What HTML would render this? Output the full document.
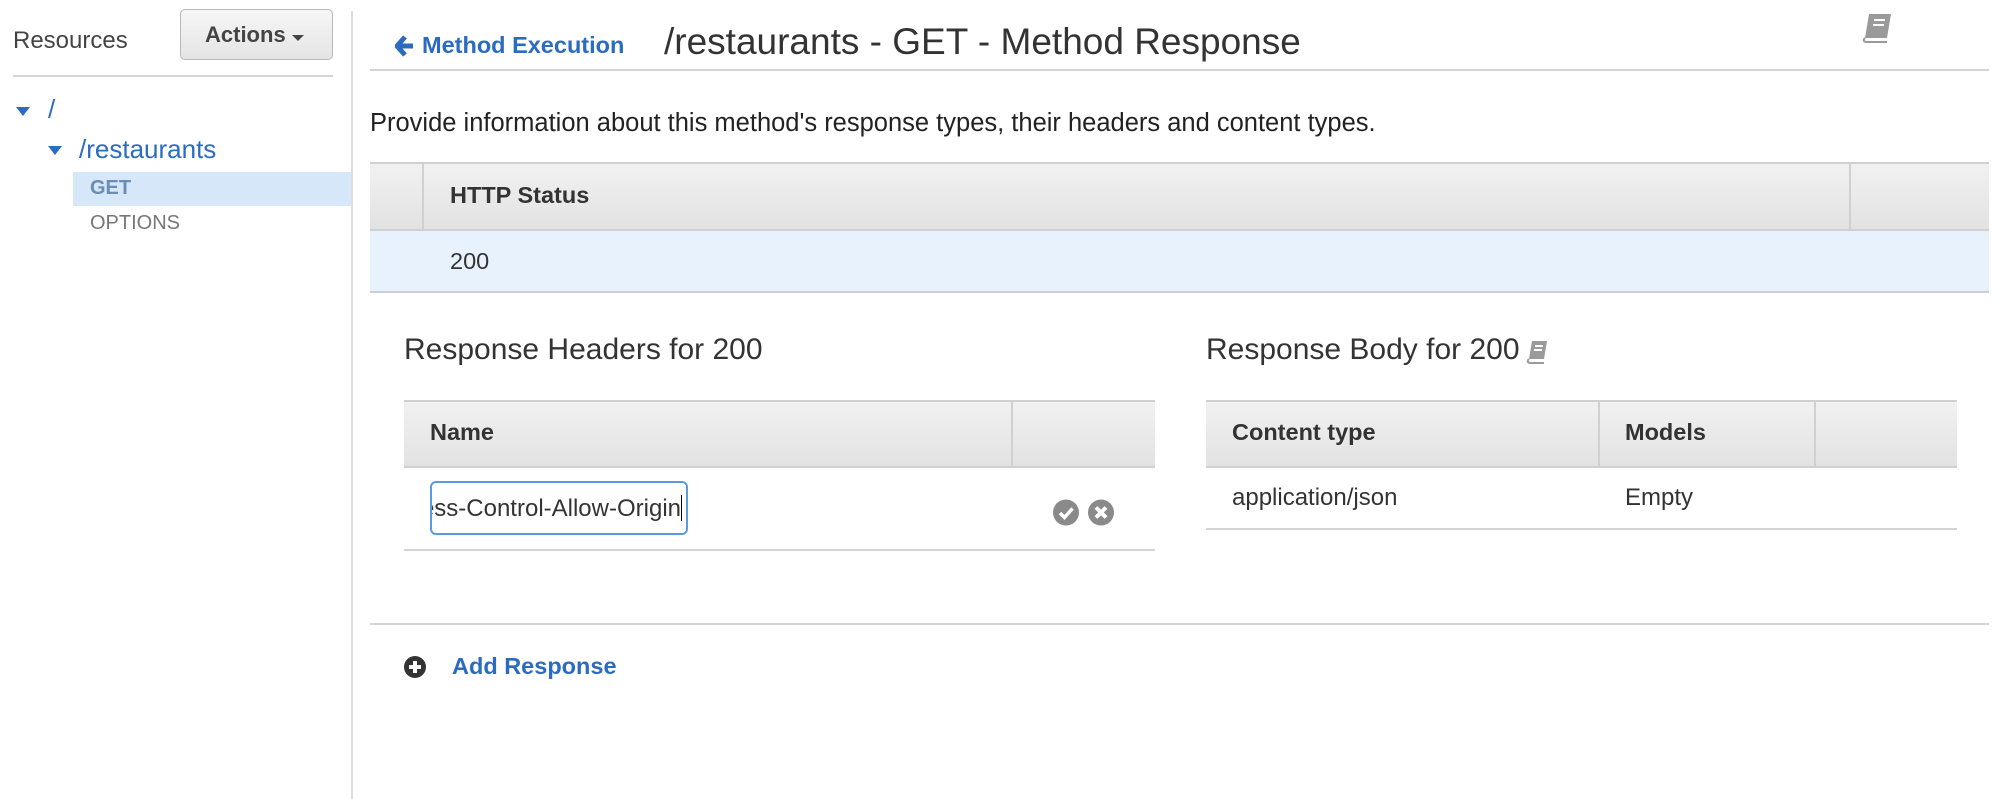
<!DOCTYPE html>
<html><head><meta charset="utf-8"><style>
*{margin:0;padding:0;box-sizing:border-box}
body{width:1999px;height:799px;background:#fff;font-family:"Liberation Sans",Arial,sans-serif;position:relative;overflow:hidden;color:#333}
.a{position:absolute;white-space:nowrap}
.blue{color:#2b6cc0}
.th{background:linear-gradient(#f1f1f1,#e2e2e2);border-top:2px solid #d0d0d0;border-bottom:2px solid #d0d0d0}
.b{font-weight:bold;color:#333}
</style></head><body>
<div class="a" style="left:13px;top:27px;font-size:24px;color:#444">Resources</div>
<div class="a" style="left:180px;top:9px;width:153px;height:51px;border:1px solid #b9b9b9;border-radius:5px;background:linear-gradient(#f7f7f7,#e4e4e4)"></div>
<div class="a" style="left:205px;top:22px;font-size:22px;font-weight:bold;color:#444">Actions</div>
<div class="a" style="left:292px;top:35px;width:0;height:0;border-left:6px solid transparent;border-right:6px solid transparent;border-top:6px solid #444"></div>
<div class="a" style="left:13px;top:75px;width:320px;height:2px;background:#d4d4d4"></div>
<div class="a" style="left:16px;top:107px;border-left:7px solid transparent;border-right:7px solid transparent;border-top:9px solid #2b6cc0"></div>
<div class="a blue" style="left:48px;top:94px;font-size:26px">/</div>
<div class="a" style="left:48px;top:146px;border-left:7px solid transparent;border-right:7px solid transparent;border-top:9px solid #2b6cc0"></div>
<div class="a blue" style="left:79px;top:134px;font-size:26px">/restaurants</div>
<div class="a" style="left:73px;top:172px;width:278px;height:34px;background:#d5e7f9"></div>
<div class="a" style="left:90px;top:177px;font-size:20px;font-weight:bold;color:#6a8db5">GET</div>
<div class="a" style="left:90px;top:212px;font-size:20px;color:#777">OPTIONS</div>
<div class="a" style="left:351px;top:11px;width:2px;height:788px;background:#ddd"></div>

<svg class="a" style="left:395px;top:35px" width="20" height="22" viewBox="0 0 20 22"><path d="M10 2 L2 11 L10 20 M2 11 H18" stroke="#2b6cc0" stroke-width="5" fill="none"/></svg>
<div class="a blue" style="left:422px;top:32px;font-size:23.5px;font-weight:bold">Method Execution</div>
<div class="a" style="left:664px;top:21px;font-size:37px;color:#333">/restaurants - GET - Method Response</div>
<svg class="a" style="left:1860px;top:13px" width="34" height="30" viewBox="0 0 34 30"><path d="M9 1 H31 L27 25 H5 Z" fill="#9a9a9a"/><path d="M5 25 Q2 28 6 29 H27" stroke="#9a9a9a" stroke-width="2" fill="none"/><rect x="14" y="6" width="11" height="2" fill="#fff"/><rect x="13" y="11" width="11" height="2" fill="#fff"/></svg>
<div class="a" style="left:370px;top:69px;width:1619px;height:2px;background:#d4d4d4"></div>
<div class="a" style="left:370px;top:109px;font-size:25.5px;color:#222">Provide information about this method's response types, their headers and content types.</div>

<div class="a th" style="left:370px;top:162px;width:1619px;height:69px"></div>
<div class="a" style="left:422px;top:164px;width:2px;height:65px;background:#d0d0d0"></div>
<div class="a" style="left:1849px;top:164px;width:2px;height:65px;background:#d0d0d0"></div>
<div class="a b" style="left:450px;top:182px;font-size:23.5px">HTTP Status</div>
<div class="a" style="left:370px;top:231px;width:1619px;height:62px;background:#e8f2fc;border-bottom:2px solid #ccd"></div>
<div class="a" style="left:450px;top:248px;font-size:23.5px;color:#333">200</div>

<div class="a" style="left:404px;top:333px;font-size:30px;color:#333">Response Headers for 200</div>
<div class="a th" style="left:404px;top:400px;width:751px;height:68px"></div>
<div class="a" style="left:1011px;top:402px;width:2px;height:64px;background:#d0d0d0"></div>
<div class="a b" style="left:430px;top:419px;font-size:23.5px">Name</div>
<div class="a" style="left:404px;top:549px;width:751px;height:2px;background:#d4d4d4"></div>
<div class="a" style="left:430px;top:481px;width:258px;height:54px;border:2px solid #5b9ae0;border-radius:6px;overflow:hidden;background:#fff">
<div class="a" style="right:4px;top:12px;font-size:24px;color:#333">ccess-Control-Allow-Origin<span style="display:inline-block;width:1px;height:26px;background:#000;vertical-align:-5px"></span></div></div>
<svg class="a" style="left:1053px;top:499px" width="62" height="27" viewBox="0 0 62 27"><circle cx="13" cy="13.5" r="13" fill="#8a8a8a"/><path d="M7 14 L11.5 18.5 L19.5 9.5" stroke="#fff" stroke-width="3.5" fill="none"/><circle cx="48" cy="13.5" r="13" fill="#8a8a8a"/><path d="M43 8.5 L53 18.5 M53 8.5 L43 18.5" stroke="#fff" stroke-width="4"/></svg>

<div class="a" style="left:1206px;top:333px;font-size:30px;color:#333">Response Body for 200</div>
<svg class="a" style="left:1526px;top:340px" width="22" height="24" viewBox="0 0 22 24"><path d="M6 1 H21 L18 19 H3 Z" fill="#9a9a9a"/><path d="M3 19 Q0 22 4 23 H18" stroke="#9a9a9a" stroke-width="2" fill="none"/><rect x="9" y="5" width="8" height="2" fill="#fff"/><rect x="8" y="9" width="8" height="2" fill="#fff"/></svg>
<div class="a th" style="left:1206px;top:400px;width:751px;height:68px"></div>
<div class="a" style="left:1598px;top:402px;width:2px;height:64px;background:#d0d0d0"></div>
<div class="a" style="left:1814px;top:402px;width:2px;height:64px;background:#d0d0d0"></div>
<div class="a b" style="left:1232px;top:419px;font-size:23.5px">Content type</div>
<div class="a b" style="left:1625px;top:419px;font-size:23.5px">Models</div>
<div class="a" style="left:1232px;top:484px;font-size:24px;color:#333">application/json</div>
<div class="a" style="left:1625px;top:484px;font-size:24px;color:#333">Empty</div>
<div class="a" style="left:1206px;top:528px;width:751px;height:2px;background:#d4d4d4"></div>

<div class="a" style="left:370px;top:623px;width:1619px;height:2px;background:#d4d4d4"></div>
<svg class="a" style="left:404px;top:656px" width="22" height="22" viewBox="0 0 22 22"><circle cx="11" cy="11" r="11" fill="#333"/><path d="M11 5 V17 M5 11 H17" stroke="#fff" stroke-width="4"/></svg>
<div class="a blue" style="left:452px;top:653px;font-size:23.5px;font-weight:bold">Add Response</div>
</body></html>
